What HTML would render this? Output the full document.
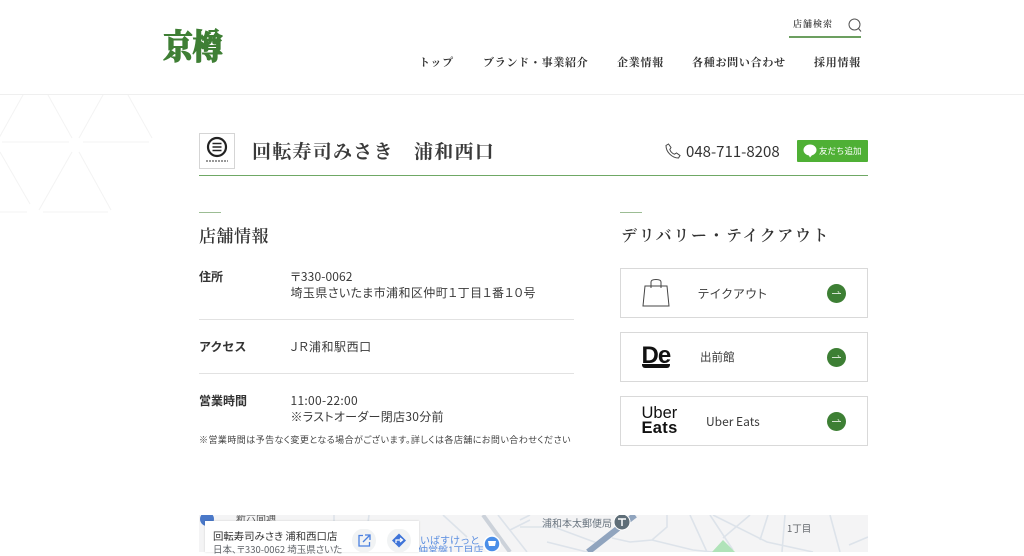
<!DOCTYPE html>
<html lang="ja"><head><meta charset="utf-8"><title>回転寿司みさき 浦和西口</title>
<style>
html,body{margin:0;padding:0;background:#fff}
body{width:1024px;height:552px;overflow:hidden;position:relative;font-family:"Liberation Sans","Noto Sans CJK JP",sans-serif;color:#333}
.a{position:absolute;white-space:nowrap;line-height:1}
.s{font-family:"Noto Serif CJK JP","Noto Serif CJK SC",serif}
.n{font-family:"Noto Sans CJK JP",sans-serif}
.nav{top:55px;font-size:11px;line-height:14px;letter-spacing:.72px;color:#333;font-weight:700}
.box{position:absolute;left:620px;width:246px;height:48px;border:1px solid #d9d9d9}
.go{position:absolute;left:827px;width:19px;height:19px;border-radius:50%;background:#3d7f34}
.go:after{content:"";position:absolute;left:5px;top:9px;width:9px;height:1px;background:#d5e4d2}
.go:before{content:"";position:absolute;left:11px;top:7px;width:1px;height:2px;background:#d5e4d2;transform:rotate(-45deg)}
.lb{font-size:12px;line-height:16px;color:#3a3a3a;font-feature-settings:"palt";letter-spacing:.42px}
.th{font-size:12px;line-height:16px;font-weight:700;color:#333}
.hr{position:absolute;left:199px;width:375px;height:1px;background:#e2e2e2}
</style></head><body>

<svg class="a" style="left:0;top:94px" width="170" height="125" fill="none" stroke="#f3f3f3" stroke-width="1">
<path d="M-1 44L23 1M48 1L72 44M2 48H69M103 1L79 44M128 1L152 44M83 48H149M0 58L30 110M72 58L39 116M79 58L111 116M0 118H27M43 118H108"/>
</svg>

<div class="a" style="left:0;top:94px;width:1024px;height:1px;background:#efefef"></div>

<div class="a s" style="left:163px;top:23px;font-size:30px;line-height:42px;font-weight:900;color:#3f7f35;letter-spacing:-.5px;transform:scaleY(1.15);transform-origin:0 50%;-webkit-text-stroke:.9px #3f7f35">京樽</div>

<div class="a s" style="left:793px;top:18px;font-size:9px;line-height:12px;letter-spacing:1px;color:#333;font-weight:600">店舗検索</div>
<svg class="a" style="left:847px;top:17px" width="16" height="16" fill="none" stroke="#555" stroke-width="1"><circle cx="7.500" cy="7.500" r="5.500"/><path d="M11.500 11.500L14 14.500"/></svg>
<div class="a" style="left:789px;top:36px;width:72px;height:2px;background:#6c9f60"></div>

<div class="a s nav" style="left:419px">トップ</div>
<div class="a s nav" style="left:483px">ブランド・事業紹介</div>
<div class="a s nav" style="left:617px">企業情報</div>
<div class="a s nav" style="left:692px">各種お問い合わせ</div>
<div class="a s nav" style="left:814px">採用情報</div>

<div class="a" style="left:199px;top:133px;width:34px;height:34px;border:1px solid #d5d5d5"></div>
<svg class="a" style="left:200px;top:134px" width="34" height="34" fill="none"><circle cx="17" cy="13" r="9" stroke="#222" stroke-width="2.200"/><path d="M12.500 9.500H21.500M12.500 13H21.500M12.500 16.500H21.500" stroke="#222" stroke-width="1.600"/><path d="M6 27H28" stroke="#777" stroke-width="1.500" stroke-dasharray="2 1"/></svg>
<div class="a s" style="left:252px;top:137px;font-size:19px;line-height:28px;letter-spacing:1.25px;font-weight:700;color:#3a3a3a">回転寿司みさき　浦和西口</div>

<svg class="a" style="left:665px;top:143px" width="16" height="16" fill="none" stroke="#444" stroke-width="1"><path d="M3.500 1L6 4.500L4.800 6.500C5.500 8.500 7.500 10.500 9.500 11.200L11.500 10L15 12.500L13.500 15C7 15 1 9 1 2.500Z"/></svg>
<div class="a n" style="left:686px;top:141px;font-size:15px;line-height:21px;color:#333">048-711-8208</div>
<div class="a" style="left:797px;top:140px;width:71px;height:22px;background:#4fb035;border-radius:1px"></div>
<svg class="a" style="left:803px;top:144px" width="15" height="14"><ellipse cx="7" cy="6" rx="6.500" ry="5.500" fill="#fff"/><path d="M5 10L7 13.500L10 10Z" fill="#fff"/></svg>
<div class="a n" style="left:819px;top:145px;font-size:8.500px;line-height:12px;color:#fff;font-weight:400">友だち追加</div>

<div class="a" style="left:199px;top:175px;width:669px;height:1px;background:#6fa865"></div>

<div class="a" style="left:199px;top:212px;width:22px;height:1px;background:#9cbd94"></div>
<div class="a s" style="left:199px;top:222px;font-size:17px;line-height:26px;letter-spacing:.5px;font-weight:600;color:#333">店舗情報</div>

<div class="a n th" style="left:199px;top:269px">住所</div>
<div class="a n lb" style="left:290.500px;top:269px"><span style="letter-spacing:.1px">〒330-0062</span><br>埼玉県さいたま市浦和区仲町１丁目１番１０号</div>
<div class="hr" style="top:319px"></div>
<div class="a n th" style="left:199px;top:339px">アクセス</div>
<div class="a n lb" style="left:290.500px;top:339px;letter-spacing:.57px">ＪＲ浦和駅西口</div>
<div class="hr" style="top:373px"></div>
<div class="a n th" style="left:199px;top:393px">営業時間</div>
<div class="a n lb" style="left:290.500px;top:393px;letter-spacing:.3px">11:00-22:00<br>※ラストオーダー閉店30分前</div>
<div class="a n" style="left:199px;top:433px;font-size:9px;line-height:13px;color:#444;font-feature-settings:'palt';letter-spacing:.44px">※営業時間は予告なく変更となる場合がございます。詳しくは各店舗にお問い合わせください</div>

<div class="a" style="left:620px;top:212px;width:22px;height:1px;background:#9cbd94"></div>
<div class="a s" style="left:621px;top:222px;font-size:16px;line-height:26px;letter-spacing:1.580px;font-weight:600;color:#333">デリバリー・テイクアウト</div>

<div class="box" style="top:268px"></div>
<svg class="a" style="left:641px;top:278px" width="30" height="30" fill="none" stroke="#444" stroke-width="1"><path d="M4 8H26L28 28H2Z"/><path d="M10 10V4C10 2 12 1.500 15 1.500C18 1.500 20 2 20 4V10"/></svg>
<div class="a n lb" style="left:698px;top:285.500px;letter-spacing:1.100px">テイクアウト</div>
<div class="go" style="top:284px"></div>

<div class="box" style="top:332px"></div>
<div class="a" style="left:641.500px;top:344px;font-size:24px;line-height:24px;font-weight:700;color:#111;letter-spacing:-1px">De</div>
<div class="a" style="left:642px;top:364px;width:28px;height:4px;background:#111;border-radius:0 0 3px 3px"></div>
<div class="a n lb" style="left:700px;top:349px;font-feature-settings:normal;font-size:11.500px;letter-spacing:0">出前館</div>
<div class="go" style="top:348px"></div>

<div class="box" style="top:396px"></div>
<div class="a" style="left:641.500px;top:406px;font-size:16.500px;line-height:15px;color:#111">Uber<br><b style="font-weight:700;letter-spacing:.3px">Eats</b></div>
<div class="a n lb" style="left:706px;top:413.500px;letter-spacing:0">Uber Eats</div>
<div class="go" style="top:412px"></div>

<svg class="a" style="left:199px;top:515px" width="669" height="37" fill="none" font-family="'Noto Sans CJK JP',sans-serif">
<rect width="669" height="37" fill="#f4f4f5"/>
<g stroke="#dde3ea" stroke-width="1.600">
<path d="M491 0L508 37M511 0L534 35M514 0L568 27L614 37M551 0L524 23M569 0L561 25M583 37L586 0M631 0L641 37"/>
<path d="M321 12L355 12L398 28M413 23L431 27L453 25L468 12L468 0M453 25L494 35L514 37M348 27L388 37M321 5L331 0"/>
<path d="M244 0L268 22M299 0L328 37M331 5L311 15M135 0V37M170 0L165 37M650 30L669 22"/>
</g>
<path d="M614 0L616 37" stroke="#d5dbe3" stroke-width="3.500" transform="translate(69 0)"/>
<path d="M284 0L311 37" stroke="#ccd2da" stroke-width="4"/>
<path d="M436 0L389 37" stroke="#90a4be" stroke-width="6"/>
<path d="M513 37L524 25L536 37Z" fill="#b0e3b9"/>
<text x="343" y="12" font-size="10" fill="#6a7580">浦和本太郵便局</text>
<circle cx="423" cy="7" r="8" fill="#5f6e78" stroke="#fff" stroke-width="1"/>
<path d="M419 4H427M423 4V11" stroke="#fff" stroke-width="1.500"/>
<text x="588" y="17" font-size="9.500" fill="#5f6368">1丁目</text>
<text x="221" y="29" font-size="10" fill="#5b8ee0">いばすけっと</text>
<text x="219" y="39" font-size="10" fill="#5b8ee0">仲営盤1丁目店</text>
<circle cx="293" cy="29" r="8" fill="#4a8ee8" stroke="#fff" stroke-width="1.500"/>
<path d="M289 26H297L296 31H290Z" fill="#fff"/>
<circle cx="8" cy="4" r="7" fill="#4a78c8"/>
<text x="37" y="6" font-size="10" fill="#555">新六間通</text>
</svg>

<div class="a" style="left:205px;top:521px;width:214px;height:31px;background:#fff;box-shadow:0 0 2px rgba(0,0,0,.15)"></div>
<div class="a n" style="left:213px;top:529px;font-size:10.400px;line-height:14px;color:#333;font-feature-settings:'palt'">回転寿司みさき 浦和西口店</div>
<div class="a n" style="left:213px;top:543px;font-size:9.500px;line-height:13px;color:#5f6368;width:130px;overflow:hidden;font-feature-settings:'palt'">日本、〒330-0062 埼玉県さいた</div>
<svg class="a" style="left:352px;top:529px" width="60" height="23" fill="none">
<circle cx="12" cy="11.500" r="12" fill="#f1f3f4"/><circle cx="47" cy="11.500" r="12" fill="#f1f3f4"/>
<path d="M11 6.500H7V17H17.500V13M13 6H18V11M18 6L11 13" stroke="#4a80e0" stroke-width="1.300"/>
<path d="M47 4.500L54 11.500L47 18.500L40 11.500Z" fill="#3f74d8"/><path d="M44 14V11H50M48 9L50.500 11L48 13" stroke="#fff" stroke-width="1.200"/>
</svg>
</body></html>
